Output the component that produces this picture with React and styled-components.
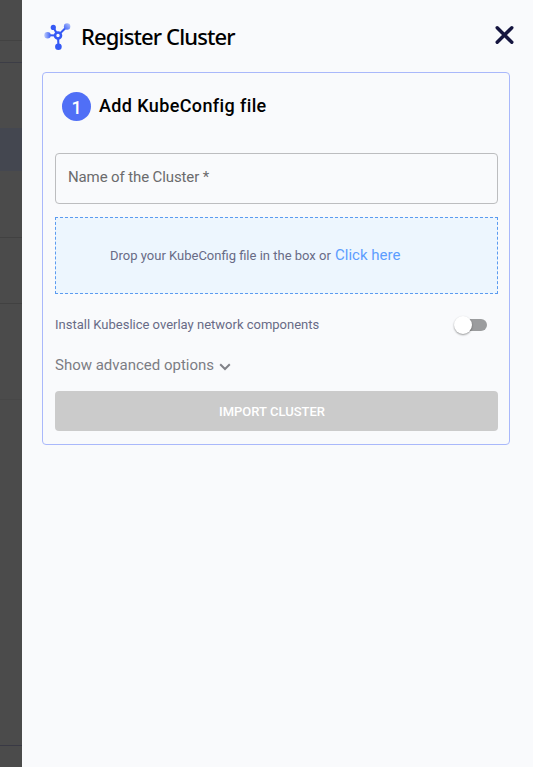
import React, { useState } from "react";
import styled, { createGlobalStyle } from "styled-components";

const GlobalStyle = createGlobalStyle`
  * {
    box-sizing: border-box;
  }
  body {
    margin: 0;
    overflow: hidden;
    background-color: #f9fafc;
    font-family: "Roboto", "Liberation Sans", sans-serif;
  }
`;

const Page = styled.div`
  display: flex;
  width: 100%;
  height: 100vh;
`;

const Backdrop = styled.div`
  width: 22px;
  flex-shrink: 0;
  background-color: #4b4b4b;
`;

const BackdropRow = styled.div`
  height: ${({ $height }) => $height}px;
  border-bottom: ${({ $line }) => ($line ? `1px solid ${$line}` : "none")};
  background-color: ${({ $active }) => ($active ? "#444750" : "transparent")};
`;

const Drawer = styled.main`
  flex: 1;
  padding: 0 23px 0 20px;
`;

const Header = styled.header`
  display: flex;
  align-items: center;
  height: 72px;
  padding-left: 1px;
  margin-right: -5px;
`;

const Title = styled.h1`
  flex: 1;
  margin: 0 0 1px 8px;
  font-family: "Noto Sans", "Open Sans", sans-serif;
  font-size: 22px;
  font-weight: 500;
  line-height: 30px;
  letter-spacing: -0.87px;
  color: #000;
`;

const CloseButton = styled.button`
  display: flex;
  padding: 0;
  margin-top: -2px;
  border: none;
  background: none;
  cursor: pointer;
`;

const Card = styled.section`
  height: 373px;
  padding: 0 11px 0 12px;
  border: 1px solid #a9b8fb;
  border-radius: 4px;
`;

const StepHeader = styled.div`
  display: flex;
  align-items: center;
  height: 67px;
  padding-left: 7px;
  margin-bottom: 13px;
`;

const StepNumber = styled.div`
  display: flex;
  align-items: center;
  justify-content: center;
  width: 29px;
  height: 29px;
  padding-top: 1px;
  border-radius: 50%;
  background-color: #506ff6;
  color: #fff;
  font-size: 18px;
  font-weight: 500;
`;

const StepTitle = styled.h2`
  margin: -3px 0 0 8px;
  font-size: 18px;
  font-weight: 500;
  letter-spacing: 0.38px;
  color: #000;
`;

const NameField = styled.div`
  display: flex;
  align-items: center;
  height: 51px;
  padding: 0 12px 3px;
  border: 1px solid #bcbdbf;
  border-radius: 4px;
  color: #6b6b6d;
  font-size: 15px;
  letter-spacing: -0.12px;
  white-space: pre;
`;

const DropZone = styled.div`
  display: flex;
  align-items: center;
  height: 77px;
  padding-left: 54px;
  margin-top: 13px;
  border: 1px dashed #5b9bf0;
  background-color: #edf6fe;
  color: #686b86;
  font-size: 13px;
  white-space: pre;
`;

const DropLink = styled.a`
  margin: -1px 0 0 1px;
  color: #5c9dff;
  font-size: 15px;
  cursor: pointer;
`;

const ToggleRow = styled.div`
  display: flex;
  align-items: center;
  justify-content: space-between;
  height: 62px;
  padding-right: 11px;
  color: #686b86;
  font-size: 13px;
`;

const ToggleLabel = styled.span`
  margin-top: -2px;
`;

const Track = styled.button`
  display: flex;
  align-items: center;
  justify-content: ${({ $on }) => ($on ? "flex-end" : "flex-start")};
  width: 31px;
  height: 12px;
  padding: 0;
  border: none;
  border-radius: 6px;
  background-color: #9b9c9e;
  cursor: pointer;
`;

const Thumb = styled.span`
  flex-shrink: 0;
  width: 18px;
  height: 18px;
  margin: 0 -2px;
  border-radius: 50%;
  background-color: #fff;
  box-shadow: 0 1px 2px rgba(0, 0, 0, 0.4);
`;

const AdvancedOptions = styled.div`
  display: flex;
  align-items: center;
  height: 18px;
  color: #7c7d84;
  font-size: 15px;
  svg {
    margin: 4px 0 0 5px;
  }
`;

const ImportButton = styled.button`
  display: block;
  width: 100%;
  height: 40px;
  margin-top: 17px;
  padding: 0 9px 0 0;
  border: none;
  border-radius: 4px;
  background-color: #cbcbcb;
  color: #fff;
  font-family: inherit;
  font-size: 13px;
  font-weight: 500;
`;

const backdropRows = [
  { height: 41, line: "#424242" },
  { height: 22, line: "#3c3d46" },
  { height: 65 },
  { height: 43, active: true },
  { height: 67, line: "#414141" },
  { height: 66, line: "#414141" },
  { height: 96, line: "#474747" },
  { height: 346, line: "#393944" },
];

function ClusterLogo() {
  return (
    <svg width="30" height="30" viewBox="0 0 30 30" fill="none">
      <defs>
        <linearGradient id="leftNode" x1="0" y1="0" x2="1" y2="0">
          <stop stopColor="#bac9fc" />
          <stop offset="1" stopColor="#3d61f7" />
        </linearGradient>
        <linearGradient id="rightNode" x1="1" y1="0" x2="0" y2="1">
          <stop stopColor="#bac9fc" />
          <stop offset="1" stopColor="#3d61f7" />
        </linearGradient>
      </defs>
      <path
        d="M4.5 14.3L15 14.5L24 5.5M10.4 6.5L15 14.5L15.5 26"
        stroke="#3559f5"
        strokeWidth="2.1"
      />
      <circle cx="4.5" cy="14.3" r="3.2" fill="url(#leftNode)" />
      <circle cx="24.1" cy="5.5" r="3.2" fill="url(#rightNode)" />
      <circle cx="10.3" cy="6.4" r="2.6" fill="#3559f5" />
      <circle cx="15.4" cy="25.8" r="3.3" fill="#3559f5" />
      <circle cx="15" cy="14.5" r="3" fill="#f9fafc" stroke="#3559f5" strokeWidth="2.6" />
    </svg>
  );
}

function App() {
  const [overlay, setOverlay] = useState(false);

  return (
    <>
      <GlobalStyle />
      <Page>
        <Backdrop>
          {backdropRows.map(({ height, line, active }, i) => (
            <BackdropRow key={i} $height={height} $line={line} $active={active} />
          ))}
        </Backdrop>
        <Drawer>
          <Header>
            <ClusterLogo />
            <Title>Register Cluster</Title>
            <CloseButton aria-label="Close">
              <svg width="20" height="20" viewBox="0 0 20 20">
                <path
                  d="M2.2 2.7L16.8 17.3M16.8 2.7L2.2 17.3"
                  stroke="#15153f"
                  strokeWidth="3.4"
                  strokeLinecap="round"
                />
              </svg>
            </CloseButton>
          </Header>
          <Card>
            <StepHeader>
              <StepNumber>1</StepNumber>
              <StepTitle>Add KubeConfig file</StepTitle>
            </StepHeader>
            <NameField>Name of the Cluster *</NameField>
            <DropZone>
              <span>Drop your KubeConfig file in the box or </span>
              <DropLink>Click here</DropLink>
            </DropZone>
            <ToggleRow>
              <ToggleLabel>Install Kubeslice overlay network components</ToggleLabel>
              <Track
                role="switch"
                aria-checked={overlay}
                aria-label="Install overlay"
                $on={overlay}
                onClick={() => setOverlay(!overlay)}
              >
                <Thumb />
              </Track>
            </ToggleRow>
            <AdvancedOptions>
              <span>Show advanced options</span>
              <svg width="12" height="8" viewBox="0 0 12 8" fill="none">
                <path d="M1.2 1.3L6 6L10.8 1.3" stroke="#818288" strokeWidth="2" />
              </svg>
            </AdvancedOptions>
            <ImportButton disabled>IMPORT CLUSTER</ImportButton>
          </Card>
        </Drawer>
      </Page>
    </>
  );
}

export default App;
